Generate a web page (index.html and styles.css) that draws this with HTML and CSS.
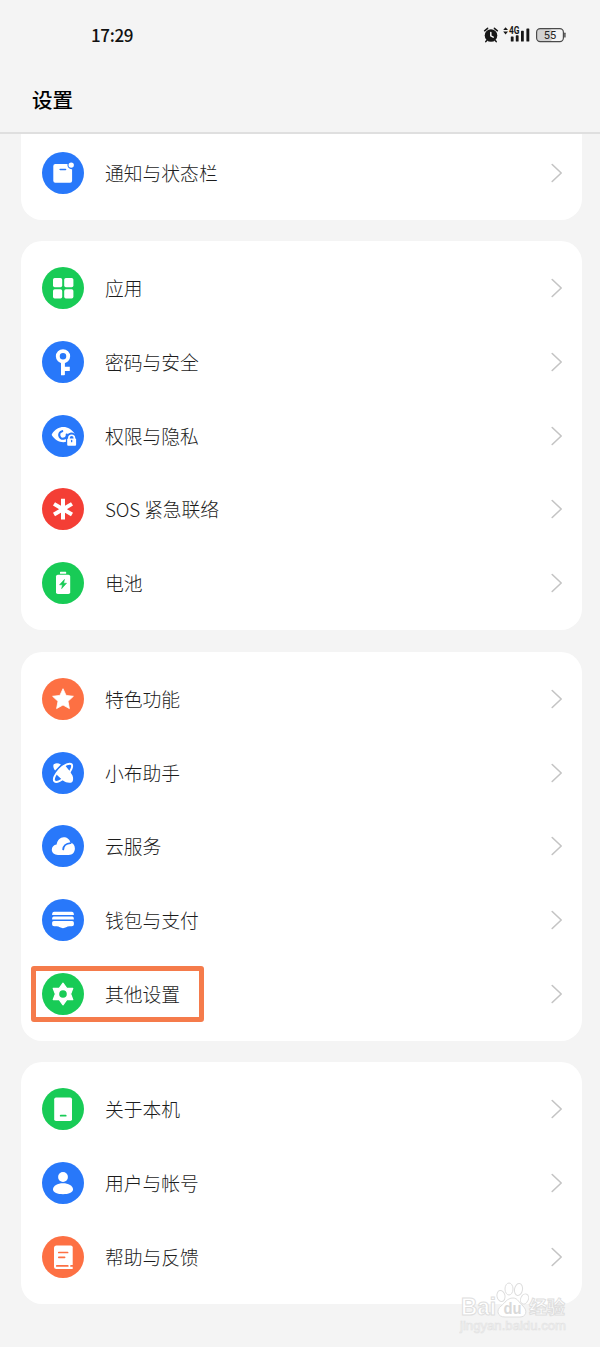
FILE: index.html
```html
<!DOCTYPE html>
<html lang="zh-CN">
<head>
<meta charset="utf-8">
<title>设置</title>
<link rel="stylesheet" href="styles.css">
</head>
<body>
<div class="screen">
  <header class="header">
    <div class="status">
      <span class="time">17:29</span>
      <svg class="status-icons" viewBox="0 0 90 24" width="90" height="24">
        <g fill="#171717">
          <circle cx="11" cy="13.5" r="6.3"/>
          <path d="M4.600 8.800l3-2.500M17.400 8.800l-3-2.500M6.800 18.500l-1 1.100M15.200 18.500l1 1.100" stroke="#171717" stroke-width="1.500" stroke-linecap="round"/>
          <path d="M10.800 10.400v3.400l2.400 1.400" fill="none" stroke="#f4f4f4" stroke-width="1.500" stroke-linecap="round"/>
          <path d="M23.200 8l2.400-2.800L28 8zM23.200 9.600l2.400 2.800 2.400-2.800z"/>
          <rect x="30.800" y="14.500" width="2.800" height="5" rx=".6"/>
          <rect x="35.800" y="13.300" width="2.800" height="6.200" rx=".6"/>
          <rect x="41" y="8.800" width="2.800" height="10.700" rx=".6"/>
          <rect x="46.400" y="6.500" width="2.900" height="13" rx=".6"/>
          <text class="net" x="29" y="11.800" textLength="10.500" lengthAdjust="spacingAndGlyphs">4G</text>
        </g>
        <rect x="57" y="7" width="15" height="12.400" rx="3" fill="#d2d2d2"/>
        <rect x="56.600" y="6.600" width="26.800" height="13" rx="3.600" fill="none" stroke="#4a4a4a" stroke-width="1.200"/>
        <path d="M84.900 11.300v3.600" stroke="#4a4a4a" stroke-width="1.400" stroke-linecap="round"/>
        <text class="level" x="70" y="17" text-anchor="middle">55</text>
      </svg>
    </div>
    <h1 class="title">设置</h1>
  </header>

  <main class="list">
    <section class="card card-cut">
      <div class="row">
        <svg class="icon blue" viewBox="0 0 42 42"><path class="w" d="M13.300 12h12.200a4.300 4.300 0 0 0 4.600 5.200v11.500a2 2 0 0 1-2 2H13.300a2 2 0 0 1-2-2V14a2 2 0 0 1 2-2z"/><circle class="w" cx="29.200" cy="13.100" r="2.700"/><path class="c" d="M18.200 17.500h5.300" stroke-width="1.600"/></svg>
        <span class="label">通知与状态栏</span><svg class="chev" viewBox="0 0 12 20"><path d="M1.200 1.500l9 8.500-9 8.500"/></svg>
      </div>
    </section>

    <section class="card">
      <div class="row">
        <svg class="icon green" viewBox="0 0 42 42"><g class="w"><rect x="11" y="11" width="9.200" height="9.200" rx="1.700"/><rect x="22.200" y="11" width="9.200" height="9.200" rx="1.700"/><rect x="11" y="22.200" width="9.200" height="9.200" rx="1.700"/><rect x="22.200" y="22.200" width="9.200" height="9.200" rx="1.700"/></g></svg>
        <span class="label">应用</span><svg class="chev" viewBox="0 0 12 20"><path d="M1.200 1.500l9 8.500-9 8.500"/></svg>
      </div>
      <div class="row">
        <svg class="icon blue" viewBox="0 0 42 42"><circle class="s" cx="21" cy="15.300" r="5.200" stroke-width="3.900"/><path class="w" d="M19 20h3.900v5.800h4.900v4.100h-4.900v3.500a.8.800 0 0 1-.8.800H19z"/></svg>
        <span class="label">密码与安全</span><svg class="chev" viewBox="0 0 12 20"><path d="M1.200 1.500l9 8.500-9 8.500"/></svg>
      </div>
      <div class="row">
        <svg class="icon blue" viewBox="0 0 42 42"><path class="w" d="M10 18.900c2.800-4.300 7-6.800 11.400-6.800s8.500 2.500 11.300 6.800c.4.600.4 1 0 1.600-2.800 4.300-6.900 6.700-11.300 6.700s-8.600-2.400-11.400-6.700c-.4-.6-.4-1 0-1.600z"/><path class="c" d="M20.200 16.200a3.800 3.800 0 1 0 4.600 3.300" stroke-width="2.200"/><path class="f" d="M23.900 31.500v-7a5.500 5.500 0 0 1 11-2.500v9.500z"/><rect class="w" x="25.200" y="23.500" width="8.900" height="7.200" rx="1"/><path class="s" d="M26.900 24v-1a2.750 2.750 0 0 1 5.500 0v1" stroke-width="1.700"/><path class="c" d="M29.650 25.500v1.200" stroke-width="1.300"/></svg>
        <span class="label">权限与隐私</span><svg class="chev" viewBox="0 0 12 20"><path d="M1.200 1.500l9 8.500-9 8.500"/></svg>
      </div>
      <div class="row">
        <svg class="icon red" viewBox="0 0 42 42"><path class="s" d="M21 10.800v20.800M12 15.900l18 10.600M30 15.900L12 26.500" stroke-width="4"/></svg>
        <span class="label label-latin">SOS 紧急联络</span><svg class="chev" viewBox="0 0 12 20"><path d="M1.200 1.500l9 8.500-9 8.500"/></svg>
      </div>
      <div class="row">
        <svg class="icon green" viewBox="0 0 42 42"><rect class="w" x="18" y="9.800" width="6.200" height="2" rx=".6"/><rect class="w" x="14" y="12.700" width="14.200" height="19.400" rx="1.800"/><path class="f bolt" d="M22.500 17.300l-5 5.500h2.900l-.8 3.900 5-5.500h-2.900z"/></svg>
        <span class="label">电池</span><svg class="chev" viewBox="0 0 12 20"><path d="M1.200 1.500l9 8.500-9 8.500"/></svg>
      </div>
    </section>

    <section class="card">
      <div class="row">
        <svg class="icon orange" viewBox="0 0 42 42"><path class="w join" d="M21 10.700l3.100 6.700 7.300.9-5.400 5 1.400 7.300-6.400-3.600-6.400 3.600 1.400-7.300-5.400-5 7.300-.9z"/></svg>
        <span class="label">特色功能</span><svg class="chev" viewBox="0 0 12 20"><path d="M1.200 1.500l9 8.500-9 8.500"/></svg>
      </div>
      <div class="row">
        <svg class="icon blue" viewBox="0 0 42 42">
          <path class="w" d="M11.300 13.700c0-2.300 3.900-3.200 7.600-1.300l-5.800 6.200c-1.200-1.500-1.800-3.200-1.800-4.900z"/>
          <g transform="rotate(-45 21 20.800)"><ellipse class="f" cx="21" cy="20.800" rx="14" ry="6.500"/><ellipse class="s" cx="21" cy="20.800" rx="12" ry="4.700" stroke-width="2"/></g>
          <path class="w" d="M15.300 19.200c2-2.700 4.700-5.200 7.300-6.400l4.200 5.200c1.100 1.900 3.900 4.800 4.200 7.300.2 1.900.2 4-1 4.900-2.300 1.200-6.500.4-8.700-1.400-1.500-1.200-5-4.600-6.800-6.200z"/>
        </svg>
        <span class="label">小布助手</span><svg class="chev" viewBox="0 0 12 20"><path d="M1.200 1.500l9 8.500-9 8.500"/></svg>
      </div>
      <div class="row">
        <svg class="icon blue" viewBox="0 0 42 42"><path class="w" d="M16 29.900c-3.500 0-6.200-2.200-6.200-5.200 0-2.800 2-4.700 4.800-5.100.8-4.300 3.500-7.300 7.100-7.300 3.300 0 6 2 6.700 5.300 2.700.6 4.500 3 4.500 5.800 0 3.700-2.500 6.500-6.200 6.500z"/><path class="c" d="M21.200 24.400c.1-3.200 2.700-6.100 7.400-6.300" stroke-width="1.900"/></svg>
        <span class="label">云服务</span><svg class="chev" viewBox="0 0 12 20"><path d="M1.200 1.500l9 8.500-9 8.500"/></svg>
      </div>
      <div class="row">
        <svg class="icon blue" viewBox="0 0 42 42"><path class="w" d="M12.200 12.800h17.600c1.300 0 2.100 1 2.100 3.100H10.100c0-2.100.8-3.100 2.100-3.100zM11.800 17.500h18.400c1.100 0 1.700.9 1.700 2.900H10.100c0-2 .6-2.900 1.700-2.900zM11.800 22h18.400c1.100 0 1.700.9 1.700 2.300v1c0 1.300-.8 2-2.100 2h-2.400c-2.600 0-4 1.900-6.400 1.900s-3.800-1.900-6.400-1.900h-2.400c-1.300 0-2.100-.7-2.100-2v-1c0-1.400.6-2.300 1.700-2.300z"/></svg>
        <span class="label">钱包与支付</span><svg class="chev" viewBox="0 0 12 20"><path d="M1.200 1.500l9 8.500-9 8.500"/></svg>
      </div>
      <div class="row marked">
        <svg class="icon green" viewBox="0 0 42 42"><path class="w gear" d="M21 10.200l3.800 5.200h6L28.600 21l2.200 5.600h-6L21 31.800l-3.800-5.200h-6l2.200-5.600-2.200-5.600h6z"/><circle class="f" cx="21" cy="21" r="3.800"/></svg>
        <span class="label">其他设置</span><svg class="chev" viewBox="0 0 12 20"><path d="M1.200 1.500l9 8.500-9 8.500"/></svg>
        <div class="highlight"></div>
      </div>
    </section>

    <section class="card">
      <div class="row">
        <svg class="icon green" viewBox="0 0 42 42"><rect class="w" x="12.200" y="9.500" width="17.800" height="23.500" rx="1.800"/><path class="c" d="M18.700 27.700h5" stroke-width="1.800"/></svg>
        <span class="label">关于本机</span><svg class="chev" viewBox="0 0 12 20"><path d="M1.200 1.500l9 8.500-9 8.500"/></svg>
      </div>
      <div class="row">
        <svg class="icon blue" viewBox="0 0 42 42"><circle class="w" cx="21" cy="15" r="4.900"/><path class="w" d="M11 27.500c0-3.800 4.600-6.200 10-6.200s10 2.400 10 6.200c0 3.100-4.600 4.700-10 4.700s-10-1.600-10-4.700z"/></svg>
        <span class="label">用户与帐号</span><svg class="chev" viewBox="0 0 12 20"><path d="M1.200 1.500l9 8.500-9 8.500"/></svg>
      </div>
      <div class="row">
        <svg class="icon orange" viewBox="0 0 42 42"><path class="w" d="M14.500 9.500h14.200a2 2 0 0 1 2 2V33H14.500a2.500 2.500 0 0 1-2.500-2.500V12a2.500 2.500 0 0 1 2.500-2.500z"/><path class="c" d="M16.800 16.500h8.800M16.800 21.300h5.800M14.800 29.900h11M29 29.900h2" stroke-width="1.700"/></svg>
        <span class="label">帮助与反馈</span><svg class="chev" viewBox="0 0 12 20"><path d="M1.200 1.500l9 8.500-9 8.500"/></svg>
      </div>
    </section>
  </main>

  <svg class="watermark" viewBox="0 0 112 58" width="112" height="58">
    <g class="wm">
      <text class="wm-main" x="2" y="34" textLength="35" lengthAdjust="spacingAndGlyphs">Bai</text>
      <ellipse cx="42" cy="15" rx="4" ry="5.600" transform="rotate(-12 42 15)"/>
      <ellipse cx="50" cy="8" rx="4" ry="6"/>
      <ellipse cx="59.500" cy="8.500" rx="4" ry="6" transform="rotate(10 59.500 8.500)"/>
      <ellipse cx="65.500" cy="18" rx="3.800" ry="5.300" transform="rotate(25 65.500 18)"/>
      <path d="M54 17c5 0 6 5 10 8 5 5 3 11-3 11H46c-8 0-9-7-4-11 4-3 6-8 12-8z"/>
      <text class="wm-cjk" x="70" y="33" textLength="36" lengthAdjust="spacingAndGlyphs">经验</text>
    </g>
    <text class="wm-du" x="44.500" y="33" textLength="18" lengthAdjust="spacingAndGlyphs">du</text>
    <text class="wm-url" x="1" y="49" textLength="106" lengthAdjust="spacingAndGlyphs">jingyan.baidu.com</text>
  </svg>
</div>
</body>
</html>
```
FILE: styles.css
```css
* { box-sizing: border-box; }
body {
  margin: 0;
  background: #f4f4f4;
  font-family: "Noto Sans CJK SC", sans-serif;
  color: #1c1c1c;
}
.screen {
  position: relative;
  width: 600px;
  height: 1347px;
  overflow: hidden;
}
.header {
  height: 134px;
  border-bottom: 2px solid #dfdfdf;
}
.status {
  display: flex;
  justify-content: space-between;
  align-items: center;
  height: 70px;
  padding: 0 30px 0 91px;
}
.time {
  font: 500 17px/24px "Noto Sans CJK SC", sans-serif;
  letter-spacing: -.35px;
  color: #111;
}
.status-icons { margin-top: -2px; }
.net { font: 700 10px Roboto, sans-serif; }
.level { font: 400 11px Roboto, sans-serif; fill: #222; }
.title {
  margin: 14px 0 0 32px;
  font-size: 20.5px;
  line-height: 30px;
  font-weight: 500;
  color: #000;
}
.list {
  display: flex;
  flex-direction: column;
  gap: 21.5px;
  padding: 0 18px 0 21px;
}
.card {
  padding: 10.3px 0;
  border-radius: 21px;
  background: #fff;
}
.card-cut {
  height: 85.7px;
  padding-top: 2px;
  border-radius: 0 0 21px 21px;
}
.row {
  position: relative;
  display: flex;
  align-items: center;
  height: 73.7px;
  padding: 0 19px 0 21px;
}
.icon {
  width: 42px;
  height: 42px;
  margin-right: 21px;
  border-radius: 50%;
  background: var(--tone);
  flex: none;
}
.blue { --tone: #2878fa; }
.green { --tone: #18cb56; }
.red { --tone: #f43e35; }
.orange { --tone: #fd7043; }
.w { fill: #fff; }
.f { fill: var(--tone); }
.s { fill: none; stroke: #fff; }
.c { fill: none; stroke: var(--tone); stroke-linecap: round; }
.join { stroke: #fff; stroke-width: .8; stroke-linejoin: round; }
.gear { stroke: #fff; stroke-width: 1.2; stroke-linejoin: round; }
.bolt { stroke: var(--tone); stroke-width: .5; }
.label {
  flex: 1;
  font-size: 18.8px;
  font-weight: 300;
  line-height: 28px;
}
.label-latin { letter-spacing: -.1px; }
.chev {
  width: 12px;
  height: 20px;
  fill: none;
  stroke: #c4c4c4;
  stroke-width: 1.6;
  stroke-linecap: round;
  stroke-linejoin: round;
}
.highlight {
  position: absolute;
  left: 10px;
  top: 9px;
  width: 173px;
  height: 56px;
  border: 5px solid #f57b4b;
  border-radius: 3px;
}
.watermark {
  position: absolute;
  left: 459px;
  top: 1281px;
}
.wm { fill: #fff; stroke: #dedede; stroke-width: 1; }
.wm-main { font: 700 23px "Liberation Sans", sans-serif; }
.wm-cjk { font: 700 18px "Noto Sans CJK SC", sans-serif; }
.wm-du { font: 700 16px "Liberation Sans", sans-serif; fill: #d9d9d9; }
.wm-url { font: 400 12px "Liberation Sans", sans-serif; fill: #f8f8f8; stroke: #e2e2e2; stroke-width: .6; }
```
